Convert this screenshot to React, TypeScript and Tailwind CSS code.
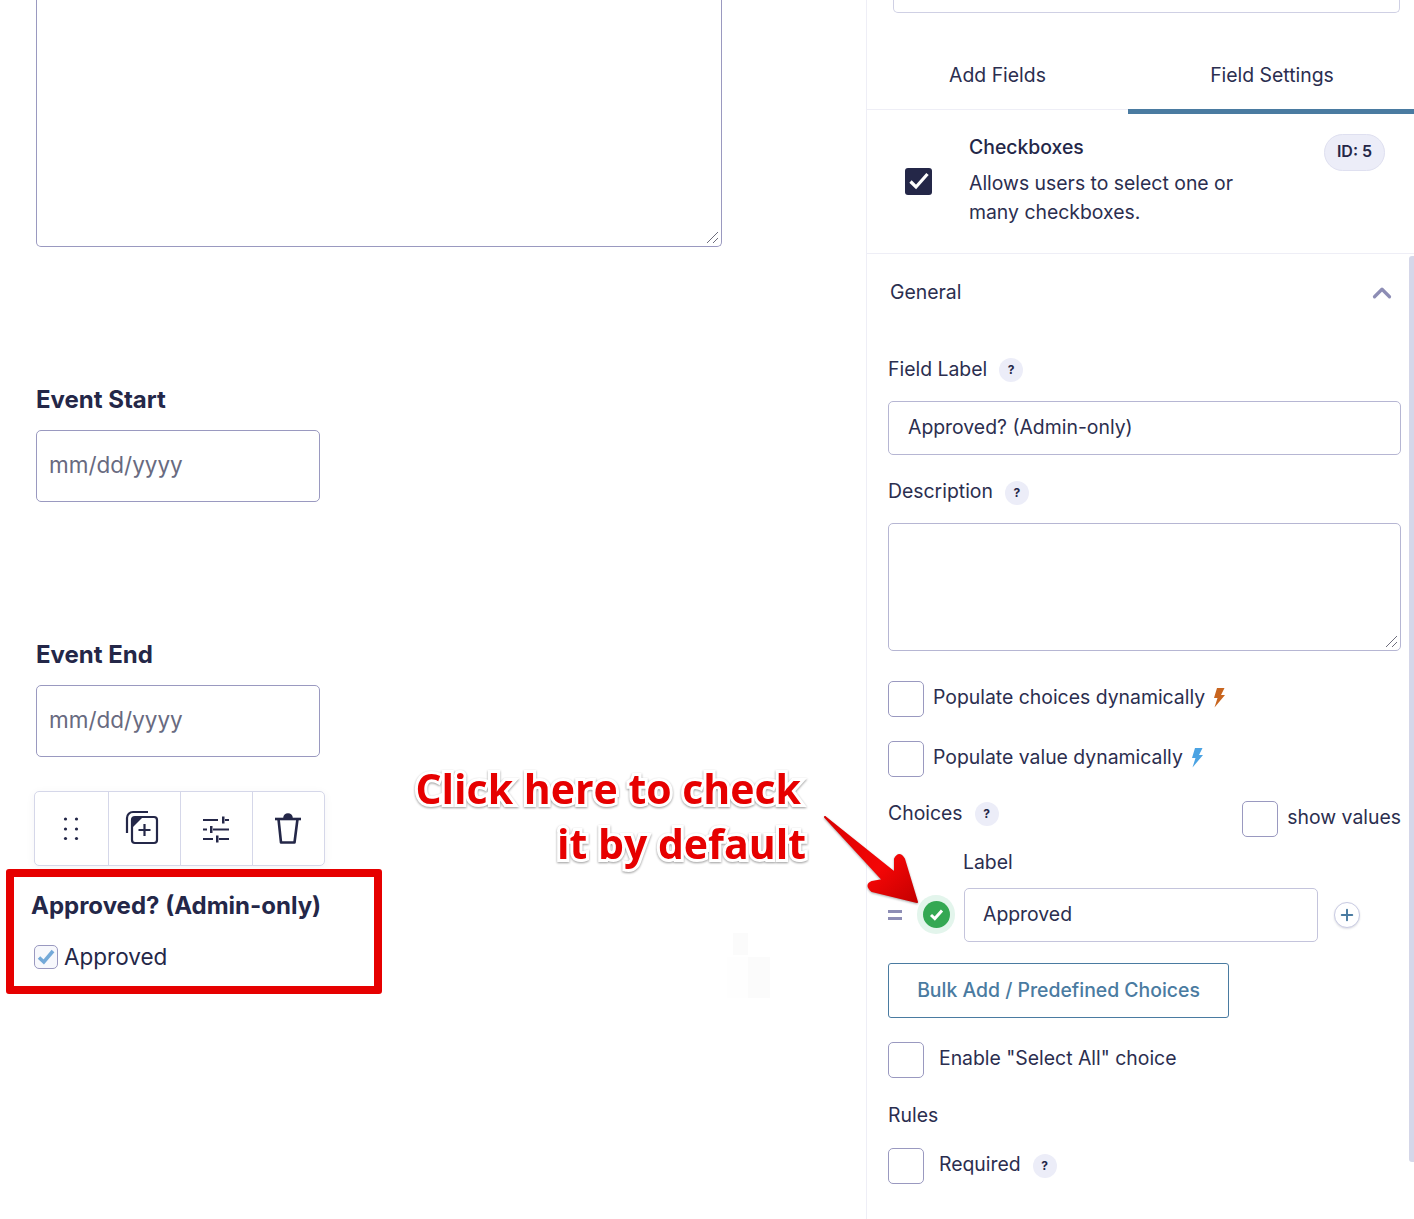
import { ChevronUp, Plus } from "lucide-react";

function HelpBadge({ className = "" }: { className?: string }) {
  return (
    <span
      className={`flex h-6 w-6 items-center justify-center rounded-full bg-[#ecedf8] text-xs font-bold text-[#242748] ${className}`}
    >
      ?
    </span>
  );
}

function EmptyBox() {
  return <div className="h-9 w-9 shrink-0 rounded-[5px] border border-[#9a99c0] bg-white" />;
}

function Bolt({ color }: { color: string }) {
  return (
    <svg width="12" height="21" viewBox="0 0 12 21" className={color}>
      <path d="M4 1 H11.5 L8 8 H12 L1.5 20.5 L4.5 11 H1 Z" fill="currentColor" />
    </svg>
  );
}

function ResizeGrip() {
  return (
    <svg width="14" height="14" viewBox="0 0 14 14" className="absolute bottom-0.5 right-0.5 text-[#6d6d7c]">
      <path d="M13 2 L2 13 M13 8 L8 13" stroke="currentColor" strokeWidth="1" />
    </svg>
  );
}

function DateField({ label }: { label: string }) {
  return (
    <div className="mt-[138px]">
      <div className="text-2xl leading-[30px] font-bold text-[#242748]">{label}</div>
      <div className="mt-[15px] flex h-[72px] w-[284px] items-center rounded-[5px] border border-[#9a99c0] pl-3 pb-0.5 text-[22.5px] text-[#686a80]">
        mm/dd/yyyy
      </div>
    </div>
  );
}

function FieldToolbar() {
  return (
    <div className="mt-[34px] -ml-0.5 flex h-[75px] w-[291px] rounded-[5px] border border-[#d5d7e9] bg-white shadow-[0_2px_10px_rgba(36,39,72,0.05)]">
      <div className="flex w-[74px] items-center justify-center border-r border-[#d5d7e9] pr-0.5">
        <svg width="16" height="26" viewBox="0 0 16 26" fill="#242748">
          <circle cx="2.5" cy="3" r="1.6" />
          <circle cx="13.5" cy="3" r="1.6" />
          <circle cx="2.5" cy="13" r="1.6" />
          <circle cx="13.5" cy="13" r="1.6" />
          <circle cx="2.5" cy="22.5" r="1.6" />
          <circle cx="13.5" cy="22.5" r="1.6" />
        </svg>
      </div>
      <div className="flex w-[72px] items-center justify-center border-r border-[#d5d7e9] pr-0.5">
        <svg width="40" height="40" viewBox="0 0 40 40" fill="none" stroke="#242748" strokeWidth="2.2">
          <rect x="8" y="8" width="25" height="26" rx="3" />
          <path d="M20.5 15 V27 M14.5 21 H26.5" />
          <path d="M3 24 V9 a6 6 0 0 1 6-6 H24" />
          <path d="M9 9 H18 L9 18 Z" fill="#242748" stroke="none" />
        </svg>
      </div>
      <div className="flex w-[72px] items-center justify-center border-r border-[#d5d7e9] pr-0.5">
        <svg width="30" height="30" viewBox="0 0 30 30" fill="none" stroke="#242748" strokeWidth="2.2">
          <path d="M2 6 H17 M24 6 H28 M2 15.5 H6 M12 15.5 H28 M2 25 H12 M18 25 H28" />
          <path d="M21 2.5 V9.5 H23.5 V2.5 Z M9 12 V19 H11.5 V12 Z M15 21.5 V28.5 H17.5 V21.5 Z" fill="#242748" stroke="none" />
        </svg>
      </div>
      <div className="flex flex-1 items-center justify-center pr-0.5">
        <svg width="30" height="34" viewBox="0 0 30 34" fill="none" stroke="#242748" strokeWidth="2.6" strokeLinejoin="round">
          <path d="M2 7 H28" />
          <path d="M5.5 7 L8 30.5 H21.5 L24.5 7" />
          <path d="M11.5 6 a3.5 3.5 0 0 1 7 0" fill="#242748" />
        </svg>
      </div>
    </div>
  );
}

function ApprovedBox() {
  return (
    <div className="mt-[3px] -ml-[30px] h-[125px] w-[376px] rounded-[3px] border-8 border-[#e60000] bg-white pt-[14px] pl-[17px]">
      <div className="text-2xl leading-[30px] font-bold text-[#242748]">Approved? (Admin-only)</div>
      <div className="mt-6 ml-[3px] flex items-center gap-1.5">
        <div className="flex h-6 w-6 items-center justify-center rounded-[5px] border border-[#9a99c0] bg-[#f7f8fc]">
          <svg width="18" height="16" viewBox="0 0 18 16" fill="none" stroke="#74a9d8" strokeWidth="3.6">
            <path d="M2 8.5 L6.8 13 L16 2" />
          </svg>
        </div>
        <span className="text-[22.5px] leading-6 text-[#242748]">Approved</span>
      </div>
    </div>
  );
}

function FormCanvas() {
  return (
    <div className="h-full w-[867px] shrink-0 border-r border-[#eeeef6] pl-9">
      <div className="relative h-[247px] w-[686px] rounded-b-[5px] border border-t-0 border-[#9a99c0]">
        <ResizeGrip />
      </div>
      <DateField label="Event Start" />
      <DateField label="Event End" />
      <FieldToolbar />
      <ApprovedBox />
    </div>
  );
}

function CheckRow({ label, children, gap = "gap-[9px]" }: { label: string; children?: React.ReactNode; gap?: string }) {
  return (
    <div className={`flex items-center ${gap}`}>
      <EmptyBox />
      <span className="-mt-1 leading-[29px]">{label}</span>
      {children}
    </div>
  );
}

function FieldSettings() {
  return (
    <div className="relative h-full w-[547px] shrink-0 text-[19.4px] leading-[29px] text-[#2b2e4f]">
      <div className="ml-[26px] h-[13px] w-[507px] rounded-b-[5px] border border-t-0 border-[#cfd0e4]" />

      {/* Tabs */}
      <div className="flex h-[97px] items-start border-b border-[#eeeef6]">
        <div className="flex h-[96px] w-[261px] items-center justify-center pt-[28px]">Add Fields</div>
        <div className="flex h-[101px] flex-1 items-center justify-center border-b-[5px] border-[#4a7ba1] pt-[28px] pl-[2px]">
          Field Settings
        </div>
      </div>

      {/* Field type header */}
      <div className="flex h-[144px] border-b border-[#eeeef6] pt-[23px] pl-[38px]">
        <div className="mt-[35px] flex h-[27px] w-[27px] items-center justify-center rounded-[3px] bg-[#242748] pb-px">
          <svg width="22" height="20" viewBox="0 0 22 20" fill="none" stroke="white" strokeWidth="3.2">
            <path d="M2.5 10.5 L8 16 L19.5 3" />
          </svg>
        </div>
        <div className="ml-[37px] w-[290px]">
          <div className="font-medium text-[#242748]">Checkboxes</div>
          <div className="mt-[7px]">Allows users to select one or many checkboxes.</div>
        </div>
        <div className="mt-px ml-auto mr-[29px] flex h-[37px] w-[61px] items-center justify-center rounded-full border border-[#dfe0f0] bg-[#ecedf8] pb-1 text-base font-semibold text-[#242748]">
          ID: 5
        </div>
      </div>

      <div className="w-[534px] pl-[21px] pt-6">
        <div className="ml-0.5 flex h-[29px] items-center justify-between pr-1">
          <span className="-mt-px">General</span>
          <ChevronUp size={30} strokeWidth={2.6} className="text-[#8d8db5]" />
        </div>

        <div className="mt-[48px] flex items-center gap-3">
          <span>Field Label</span>
          <HelpBadge />
        </div>
        <div className="mt-[17px] flex h-[54px] w-[513px] items-center rounded-[5px] border border-[#b6b6d3] pl-[19px] pb-0.5">
          Approved? (Admin-only)
        </div>

        <div className="mt-[22px] flex items-center gap-3">
          <span>Description</span>
          <HelpBadge className="mt-0.5" />
        </div>
        <div className="relative mt-[17px] h-32 w-[513px] rounded-[5px] border border-[#b6b6d3]">
          <ResizeGrip />
        </div>

        <div className="mt-[30px]">
          <CheckRow label="Populate choices dynamically">
            <span className="-mt-1 -ml-[1px]">
              <Bolt color="text-[#c8651f]" />
            </span>
          </CheckRow>
        </div>
        <div className="mt-6">
          <CheckRow label="Populate value dynamically">
            <span className="-mt-1 -ml-[1px]">
              <Bolt color="text-[#4ba3e3]" />
            </span>
          </CheckRow>
        </div>

        <div className="mt-6 flex w-[513px] items-start justify-between">
          <div className="-mt-0.5 flex items-center gap-3">
            <span>Choices</span>
            <HelpBadge />
          </div>
          <div className="flex items-center gap-[9px]">
            <EmptyBox />
            <span className="pb-1">show values</span>
          </div>
        </div>

        <div className="mt-[11px] ml-[75px]">Label</div>
        <div className="mt-[11px] flex h-[54px] items-center">
          <div className="flex w-[14px] flex-col gap-1">
            <div className="h-[3px] bg-[#8d8db5]" />
            <div className="h-[3px] bg-[#8d8db5]" />
          </div>
          <div className="-mt-px ml-[15px] flex h-[39px] w-[38px] items-center justify-center rounded-full bg-[#e3f5ec]">
            <div className="flex h-[27px] w-[27px] items-center justify-center rounded-full bg-[#34a853]">
              <svg width="15" height="13" viewBox="0 0 15 13" fill="none" stroke="white" strokeWidth="3">
                <path d="M2 7 L5.8 10.5 L13 2.5" />
              </svg>
            </div>
          </div>
          <div className="ml-[9px] flex h-[54px] w-[354px] items-center rounded-[5px] border border-[#c4c4dc] pl-[18px] pb-0.5">
            Approved
          </div>
          <div className="-mt-px ml-4 flex h-[26px] w-[26px] items-center justify-center rounded-full border border-[#c9cbe3] bg-white shadow-[0_1px_2px_rgba(36,39,72,0.15)]">
            <Plus size={18} strokeWidth={2.6} className="text-[#4a7ba1]" />
          </div>
        </div>

        <div className="mt-[21px] flex h-[55px] w-[341px] items-center justify-center rounded-[3px] border border-[#4a7ba1] font-medium text-[#4a7ba1]">
          Bulk Add / Predefined Choices
        </div>

        <div className="mt-6">
          <CheckRow label={'Enable "Select All" choice'} gap="gap-[15px]" />
        </div>
        <div className="mt-[23px]">Rules</div>
        <div className="mt-[18px]">
          <CheckRow label="Required" gap="gap-[15px]">
            <HelpBadge className="-ml-[3px]" />
          </CheckRow>
        </div>
      </div>

      {/* Scrollbar */}
      <div className="absolute top-[256px] right-0 h-[906px] w-[5px] rounded-l-[3px] bg-[#d5d7e9]" />
    </div>
  );
}

function Annotation() {
  return (
    <>
      <div className="absolute top-[761px] right-[608px] text-right font-['Open_Sans',sans-serif] text-[41px] leading-[55px] font-bold whitespace-nowrap text-[#e60000] [-webkit-text-stroke:6px_white] [paint-order:stroke_fill] [filter:drop-shadow(0_1px_1px_rgba(0,0,0,0.4))]">
        <div className="pr-[5px]">Click here to check</div>
        <div>it by default</div>
      </div>

      {/* arrow */}
      <svg width="110" height="110" viewBox="0 0 110 110" className="absolute top-[810px] left-[820px] [filter:drop-shadow(0_1px_1px_rgba(0,0,0,0.35))]">
        <defs>
          <linearGradient id="arrowFill" x1="0" y1="0" x2="1" y2="1">
            <stop offset="0" stopColor="#d90000" />
            <stop offset="0.6" stopColor="#f40606" />
            <stop offset="1" stopColor="#c40000" />
          </linearGradient>
        </defs>
        <path
          d="M5 7 L75 63 L75 49 Q79 41 84 49 L97 92 L52 81 Q45 75 52 72 L63 70 Z"
          fill="url(#arrowFill)"
          stroke="url(#arrowFill)"
          strokeWidth="2"
          strokeLinejoin="round"
        />
      </svg>

      {/* leftover smudge in the source image */}
      <div className="absolute top-[933px] left-[733px] h-[22px] w-[15px] bg-[#fbfbfb]" />
      <div className="absolute top-[957px] left-[727px] h-[41px] w-[21px] bg-[#fefefe]" />
      <div className="absolute top-[957px] left-[748px] h-[41px] w-[22px] bg-[#fbfbfb]" />
    </>
  );
}

export default function App() {
  return (
    <div className="relative flex h-[1219px] w-[1414px] overflow-hidden bg-white font-['Inter',sans-serif]">
      <FormCanvas />
      <FieldSettings />
      <Annotation />
    </div>
  );
}
